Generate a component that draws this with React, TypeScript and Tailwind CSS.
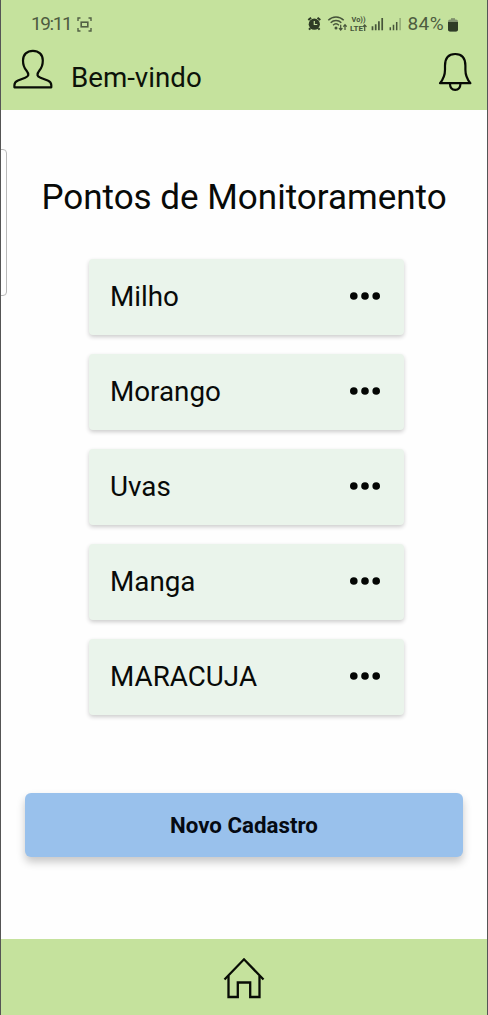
const points = ['Milho', 'Morango', 'Uvas', 'Manga', 'MARACUJA'];

function CaptureIcon() {
  return (
    <svg className="ml-[6px] h-[15px] w-[15px]" viewBox="0 0 15 15" fill="none" stroke="#526044" strokeWidth="1.4">
      <path d="M1 4V1h2.500M11.500 1H14v3M14 11v3h-2.500M3.500 14H1v-3" />
      <rect x="4.200" y="5.200" width="6.600" height="4.600" strokeWidth="1.600" />
    </svg>
  );
}

function StatusIcons() {
  return (
    <svg className="h-[18px] w-[96px]" viewBox="306 15 96 18" fill="none">
      <circle cx="313.300" cy="24.200" r="5.600" fill="#2e3b25" />
      <path d="M307.300 20l2.800-2.300M319.300 20l-2.800-2.300M309.300 28.200l-1.300 1.400M317.300 28.200l1.300 1.400" stroke="#2e3b25" strokeWidth="2" />
      <path d="M313.300 21v3.500h3" stroke="#c5e29d" strokeWidth="1.200" />
      <g stroke="#46543a" strokeWidth="1.500">
        <path d="M327.300 20.200c4.200-4.400 11.200-4.400 15.400 0M329.700 22.800c3-3 7.600-3 10.600 0M332.100 25.200c1.700-1.600 4.100-1.600 5.800 0" />
        <path d="M339.700 30v-5.200M338 28.200l1.700 1.900 1.700-1.900M344 30v-5.200M342.300 26.600l1.700-1.900 1.700 1.900" strokeWidth="1.200" />
      </g>
      <circle cx="335" cy="28" r="1.500" fill="#46543a" />
      <text x="350.500" y="22.300" textLength="14" lengthAdjust="spacingAndGlyphs" fontSize="6.800" fontWeight="700" fill="#46543a">Vo))</text>
      <text x="349" y="30.700" textLength="13" lengthAdjust="spacingAndGlyphs" fontSize="7.400" fontWeight="700" fill="#46543a">LTE</text>
      <path d="M363.700 31v-6M361.900 26.800l1.800-1.900 1.800 1.900" stroke="#46543a" strokeWidth="1.200" />
      <path d="M371.500 30.300v-4M374.700 30.300v-6M377.900 30.300v-9" stroke="#46543a" strokeWidth="1.700" />
      <path d="M381.200 30.300v-12.300" stroke="#46543a" strokeWidth="1.700" />
      <path d="M389.300 30.300v-3M392.500 30.300v-5.500M395.700 30.300v-8.300" stroke="#46543a" strokeWidth="1.500" />
      <path d="M399.100 30.300v-12.300" stroke="#8da572" strokeWidth="1.400" />
    </svg>
  );
}

function BatteryIcon() {
  return (
    <svg className="ml-[4px] h-[15px] w-[10px]" viewBox="0 0 10 15">
      <path d="M3 1.200h4v2H3z" fill="#7a8b68" />
      <rect x="0" y="2.500" width="10" height="12" rx="2" fill="#819270" />
      <path d="M0 5h10v7.500a2 2 0 0 1-2 2H2a2 2 0 0 1-2-2z" fill="#2f3c27" />
    </svg>
  );
}

function UserIcon() {
  return (
    <svg className="h-[42px] w-[42px]" viewBox="12 48 42 42" fill="none" stroke="#090d06" strokeWidth="2.200" strokeLinejoin="round">
      <path d="M28.300 75.200c.3-1.700-.6-3.100-1.900-4.700-2.500-2.900-3.400-5.600-3.400-10 0-6 4.100-9.700 9.900-9.700s9.900 3.700 9.900 9.700c0 4.400-.9 7.100-3.400 10-1.300 1.600-2.200 3-1.900 4.700.2 1.300 1.300 1.800 3 2.500l7.200 2.800c2.700 1.100 3.600 2.400 3.600 4.800V87.300H14.400v-2c0-2.400.9-3.700 3.600-4.800l7.200-2.800c1.800-.7 2.900-1.200 3.100-2.500z" />
    </svg>
  );
}

function BellIcon() {
  return (
    <svg className="h-[42px] w-[36px]" viewBox="437 51 36 42" fill="none" stroke="#070a05" strokeWidth="2.200" strokeLinejoin="round">
      <path d="M440 83.200c3.700-4.500 5-7.800 5-13.500v-4c0-7.500 3.700-11.700 10.200-11.700s10.200 4.200 10.200 11.700v4c0 5.700 1.300 9 5 13.500z" />
      <path d="M449.900 83.500c.2 4.300 1.900 6.400 5.300 6.400s5.100-2.100 5.300-6.400" />
    </svg>
  );
}

function HomeIcon() {
  return (
    <svg className="h-[44px] w-[44px]" viewBox="222 956 44 44" fill="none" stroke="#080c05" strokeWidth="2.300">
      <path d="M224.500 979.500L244 959.300l19.500 20.200" />
      <path d="M228.500 976v21h9.300v-14.500h12.400V997h9.300v-21" />
    </svg>
  );
}

export default function App() {
  return (
    <div className="relative flex h-[1015px] w-[488px] flex-col overflow-hidden border-x border-[#555] bg-[#fefefe] font-['Roboto',sans-serif] text-[#080a08]">
      <header className="h-[110px] shrink-0 bg-[#c5e29d]">
        <div className="flex h-[48px] items-center justify-between pl-[30px] pr-[29px] text-[19px] text-[#4e5c40]">
          <div className="flex items-center">
            <span className="tracking-[-1.4px]">19:11</span>
            <CaptureIcon />
          </div>
          <div className="flex items-center">
            <StatusIcons />
            <span className="ml-[5px] text-[19px] tracking-[0.400px]">84%</span>
            <BatteryIcon />
          </div>
        </div>
        <div className="flex h-[42px] items-start pl-[11px] pr-[14px]">
          <UserIcon />
          <span className="ml-[17px] mt-[13px] text-[27.700px] leading-[34px] text-[#0c1209]">Bem-vindo</span>
          <div className="ml-auto mt-[3px]">
            <BellIcon />
          </div>
        </div>
      </header>

      <main className="flex flex-1 flex-col items-center">
        <h1 className="mt-[66px] whitespace-nowrap text-[35px] leading-[44px]">Pontos de Monitoramento</h1>
        <ul className="ml-[5px] mt-[39px] flex w-[315px] flex-col gap-[19px]">
          {points.map((point) => (
            <li
              key={point}
              className="flex h-[76px] items-center justify-between rounded-[4px] bg-[#eaf4eb] pl-[21px] pr-[24px] shadow-[0_2px_4px_rgba(0,0,0,0.2)]"
            >
              <span className="text-[27.800px] leading-[34px]">{point}</span>
              <svg className="mb-[2px] h-[8px] w-[30px]" viewBox="0 0 30 8" fill="#030503">
                <circle cx="3.800" cy="4" r="3.800" />
                <circle cx="15" cy="4" r="3.800" />
                <circle cx="26.200" cy="4" r="3.800" />
              </svg>
            </li>
          ))}
        </ul>
        <button className="mt-[78px] h-[64px] w-[438px] rounded-[6px] bg-[#99c1ec] pt-[2px] text-[22.300px] font-bold text-[#050a12] shadow-[0_5px_9px_rgba(0,0,0,0.22)]">
          Novo Cadastro
        </button>
      </main>

      <nav className="flex h-[76px] shrink-0 justify-center bg-[#c5e29d] pt-[17px]">
        <HomeIcon />
      </nav>
      <div className="absolute -left-[6px] top-[149px] h-[147px] w-[12px] rounded-[4px] border border-[#b9b9b9] bg-[#fefefe]" />
    </div>
  );
}
